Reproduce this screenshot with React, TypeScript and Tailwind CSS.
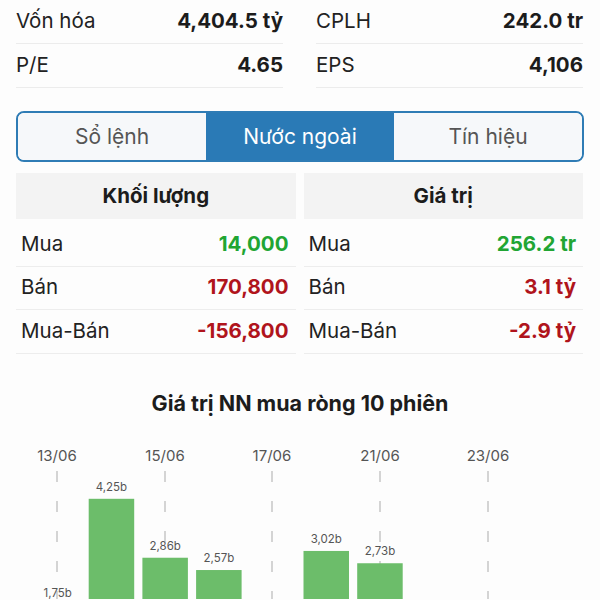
import React from "react";

const font = { fontFamily: "Inter, 'Noto Sans', sans-serif" };

const summary = [
  [
    { label: "Vốn hóa", value: "4,404.5 tỷ" },
    { label: "P/E", value: "4.65" },
  ],
  [
    { label: "CPLH", value: "242.0 tr" },
    { label: "EPS", value: "4,106" },
  ],
];

const tables = [
  {
    title: "Khối lượng",
    rows: [
      { label: "Mua", value: "14,000", up: true },
      { label: "Bán", value: "170,800", up: false },
      { label: "Mua-Bán", value: "-156,800", up: false },
    ],
  },
  {
    title: "Giá trị",
    rows: [
      { label: "Mua", value: "256.2 tr", up: true },
      { label: "Bán", value: "3.1 tỷ", up: false },
      { label: "Mua-Bán", value: "-2.9 tỷ", up: false },
    ],
  },
];

const tabs = ["Sổ lệnh", "Nước ngoài", "Tín hiệu"];

// chart, page coords minus TOP
const TOP = 430;
const BASE = 680;
const SCALE = 42.4;
const dates = [
  { x: 57, d: "13/06" },
  { x: 165, d: "15/06" },
  { x: 272, d: "17/06" },
  { x: 380, d: "21/06" },
  { x: 488, d: "23/06" },
];
const bars = [
  { slot: 0, v: 1.75, t: "1,75b" },
  { slot: 1, v: 4.25, t: "4,25b" },
  { slot: 2, v: 2.86, t: "2,86b" },
  { slot: 3, v: 2.57, t: "2,57b" },
  { slot: 5, v: 3.02, t: "3,02b" },
  { slot: 6, v: 2.73, t: "2,73b" },
];

function Chart() {
  return (
    <svg width={600} height={170} className="block" style={font}>
      {dates.map((d) => (
        <g key={d.d}>
          <text x={d.x} y={462 - TOP} textAnchor="middle" fontSize={15} fill="#555">
            {d.d}
          </text>
          <line
            x1={d.x}
            x2={d.x}
            y1={472 - TOP}
            y2={BASE - TOP}
            stroke="#c6c6c6"
            strokeWidth={1.5}
            strokeDasharray="11 19"
          />
        </g>
      ))}
      {bars.map((b) => {
        const x = 35 + b.slot * 53.7;
        const top = BASE - b.v * SCALE;
        return (
          <g key={b.slot}>
            <rect x={x} y={top - TOP} width={45.5} height={b.v * SCALE} fill="#6cbd6a" />
            <text x={x + 22.75} y={top - TOP - 8} textAnchor="middle" fontSize={11.5} fill="#555">
              {b.t}
            </text>
          </g>
        );
      })}
    </svg>
  );
}

export default function App() {
  return (
    <div className="w-[600px] h-[600px] overflow-hidden bg-[#fdfdfd] text-[#1c1c1c]" style={font}>
      <div className="grid grid-cols-2 gap-[33px] pl-[16px] pr-[17px]">
        {summary.map((col, i) => (
          <div key={i}>
            {col.map((r) => (
              <div
                key={r.label}
                className="h-[44px] flex items-center justify-between border-b border-[#ececec] text-[20.5px]"
              >
                <span className="text-[#222]">{r.label}</span>
                <span className="font-bold text-[20.5px]">{r.value}</span>
              </div>
            ))}
          </div>
        ))}
      </div>

      <div className="mx-[16px] mt-[23px] h-[51px] flex rounded-[8px] border-2 border-[#2f7cb5] overflow-hidden">
        {tabs.map((t, i) => (
          <div
            key={t}
            className={
              i === 1
                ? "flex-1 flex items-center justify-center bg-[#2a7ab6] text-white text-[21px]"
                : "flex-1 flex items-center justify-center bg-[#f6f8fa] text-[#555] text-[21px]"
            }
          >
            {t}
          </div>
        ))}
      </div>

      <div className="grid grid-cols-2 gap-[8px] pl-[16px] pr-[17px] mt-[11px]">
        {tables.map((tb) => (
          <div key={tb.title}>
            <div className="h-[46px] flex items-center justify-center bg-[#f3f3f3] font-bold text-[20.5px]">
              {tb.title}
            </div>
            <div className="pt-[4px]">
              {tb.rows.map((r) => (
                <div
                  key={r.label}
                  className="h-[43.5px] flex items-center justify-between pl-[5px] pr-[7px] border-b border-[#ededed] text-[20.5px]"
                >
                  <span className="text-[#222]">{r.label}</span>
                  <span
                    className={
                      r.up ? "font-bold text-[#21a533]" : "font-bold text-[#b0141c]"
                    }
                  >
                    {r.value}
                  </span>
                </div>
              ))}
            </div>
          </div>
        ))}
      </div>

      <div className="mt-[36px] text-center font-bold text-[21.5px] leading-[26px]">
        Giá trị NN mua ròng 10 phiên
      </div>
      <div className="mt-[13px]">
        <Chart />
      </div>
    </div>
  );
}
